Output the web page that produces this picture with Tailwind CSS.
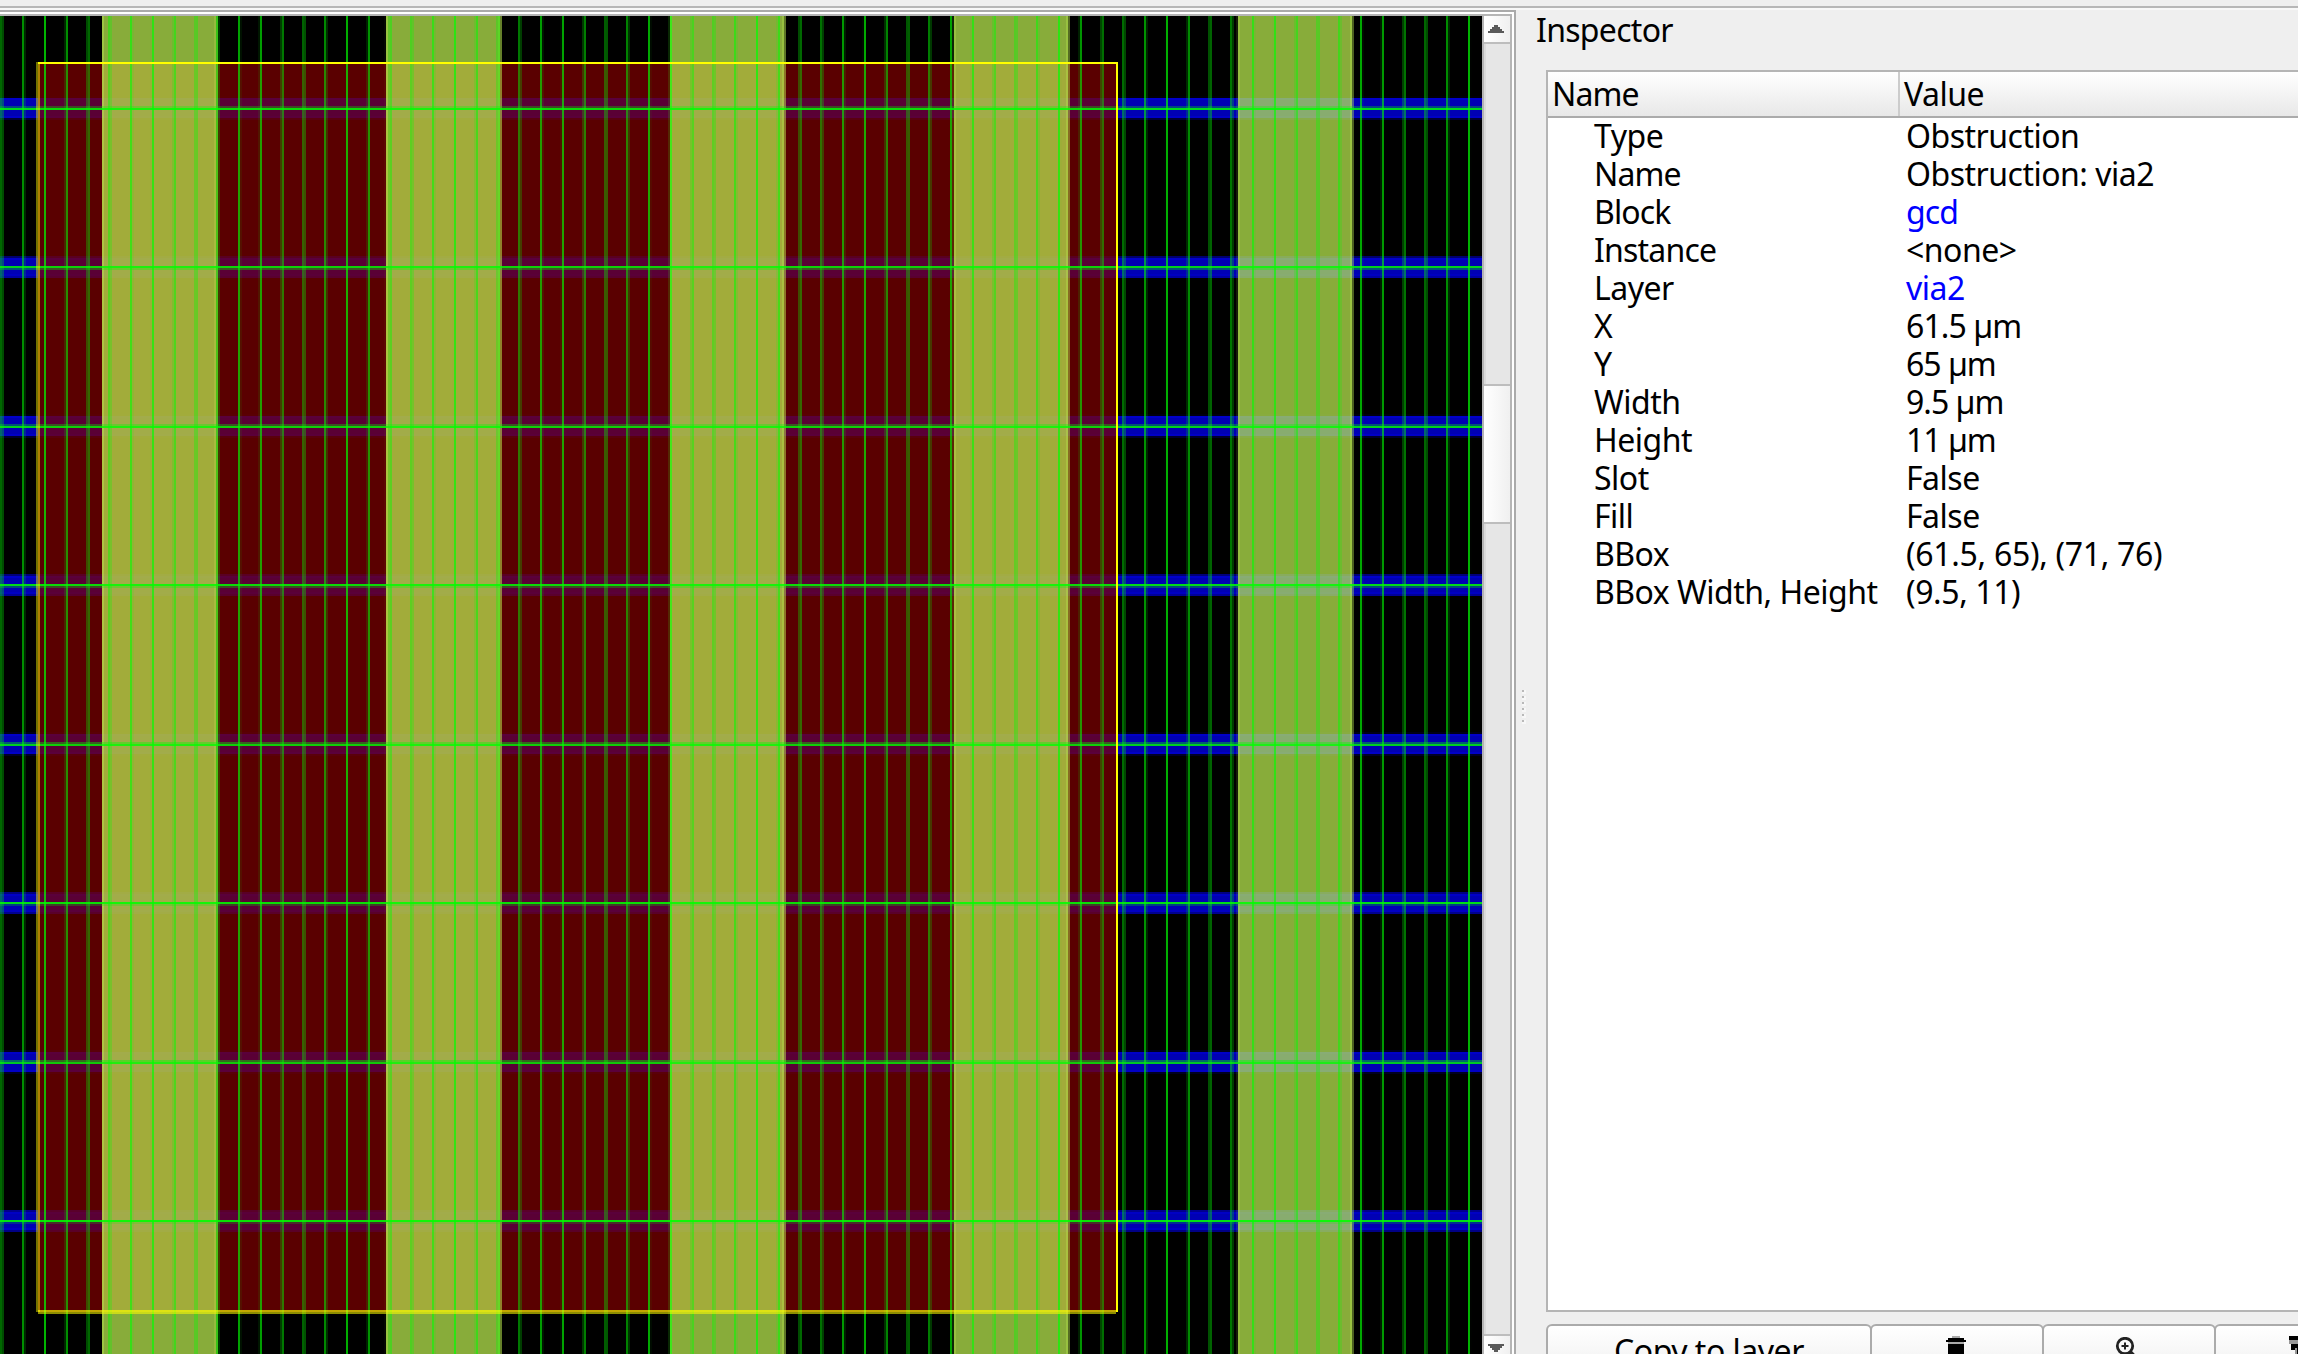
<!DOCTYPE html>
<html lang="en">
<head>
<meta charset="utf-8">
<title>Inspector</title>
<script src="https://cdn.jsdelivr.net/npm/@tailwindcss/browser@4"></script>
</head>
<body class="flex h-[1354px] w-[2298px] flex-col overflow-hidden bg-[#efefef] font-['Noto_Sans',sans-serif] text-[32px] tracking-[-0.5px] text-black">
  <div class="h-2 shrink-0 border-b-2 border-[#b7b7b7]"></div>
  <div class="h-0.5 shrink-0 bg-[#f8f8f8]"></div>

  <div class="flex min-h-0 flex-1">
    <!-- Layout viewer -->
    <main class="flex w-[1516px] shrink-0 flex-col border-t-2 border-r-2 border-[#aaaaaa] bg-white pt-0.5 pr-0.5">
      <div class="flex min-h-0 flex-1 border-t-2 border-r-2 border-[#b5b5b5]">
        <canvas id="layout" width="741" height="669" class="h-[1338px] w-[1482px] shrink-0 bg-black [image-rendering:pixelated]"></canvas>
        <div class="flex w-7 shrink-0 flex-col border-l-2 border-[#b5b5b5]">
          <div class="flex h-7 shrink-0 items-center border-b-2 border-[#bdbdbd] bg-linear-to-r from-white to-[#f0f0f0] pl-1">
            <svg class="h-2 w-4" viewBox="0 0 16 8" fill="#5a5a5a"><path d="M6 0h4v2h2v2h2v2h2v2H0V6h2V4h2V2h2z"/></svg>
          </div>
          <div class="h-[340px] shrink-0 border-l-2 border-[#dadada] bg-[#e6e6e6]"></div>
          <div class="h-[140px] shrink-0 border-y-2 border-[#bdbdbd] bg-linear-to-r from-white to-[#f0f0f0]"></div>
          <div class="flex-1 border-l-2 border-[#dadada] bg-[#e6e6e6]"></div>
          <div class="flex h-5 shrink-0 border-t-2 border-[#bdbdbd] bg-linear-to-r from-white to-[#f0f0f0] pt-2 pl-1">
            <svg class="h-2 w-4" viewBox="0 0 16 8" fill="#5a5a5a"><path d="M6 8h4V6h2V4h2V2h2V0H0v2h2v2h2v2h2z"/></svg>
          </div>
        </div>
      </div>
    </main>

    <!-- Splitter handle -->
    <div class="flex w-[19px] shrink-0 flex-col pt-[680px] pl-1.5">
      <svg class="h-9 w-1 shrink-0" viewBox="0 0 4 36">
        <path d="M2 0h2v4H0V2h2zM2 6h2v4H0V8h2zM2 12h2v4H0v-2h2zM2 18h2v4H0v-2h2zM2 24h2v4H0v-2h2zM2 30h2v4H0v-2h2z" fill="#f7f7f7"/>
        <path d="M0 0h2v2H0zM0 6h2v2H0zM0 12h2v2H0zM0 18h2v2H0zM0 24h2v2H0zM0 30h2v2H0z" fill="#b9b9b9"/>
      </svg>
    </div>

    <aside class="flex min-w-0 flex-1 flex-col">
      <h1 class="h-[60px] shrink-0 pl-px leading-[40px] tracking-[-0.7px]">Inspector</h1>
      <div class="ml-[11px] flex h-[1242px] shrink-0 flex-col border-y-2 border-l-2 border-[#b5b5b5] bg-white">
        <div class="flex h-[46px] shrink-0 border-b-2 border-[#ababab] bg-linear-to-b from-white to-[#e8e8e8] leading-[44px]">
          <div class="w-[352px] shrink-0 border-r-2 border-[#cccccc] pl-1 tracking-[-0.9px]">Name</div>
          <div class="pl-1">Value</div>
        </div>
        <dl class="grid auto-rows-[38px] grid-cols-[312px_1fr] pl-[46px] leading-[35px] whitespace-nowrap">
          <dt>Type</dt><dd>Obstruction</dd>
          <dt class="tracking-[-0.9px]">Name</dt><dd>Obstruction: via2</dd>
          <dt class="tracking-[-0.9px]">Block</dt><dd class="tracking-[-0.9px] text-[#0000ff]">gcd</dd>
          <dt class="tracking-[-0.8px]">Instance</dt><dd>&lt;none&gt;</dd>
          <dt>Layer</dt><dd class="text-[#0000ff]">via2</dd>
          <dt>X</dt><dd class="tracking-[-0.9px]">61.5 µm</dd>
          <dt>Y</dt><dd class="tracking-[-1px]">65 µm</dd>
          <dt>Width</dt><dd class="tracking-[-1px]">9.5 µm</dd>
          <dt>Height</dt><dd class="tracking-[-1px]">11 µm</dd>
          <dt>Slot</dt><dd>False</dd>
          <dt>Fill</dt><dd>False</dd>
          <dt>BBox</dt><dd class="tracking-[-0.3px]">(61.5, 65), (71, 76)</dd>
          <dt>BBox Width, Height</dt><dd class="tracking-[-0.4px]">(9.5, 11)</dd>
        </dl>
      </div>
      <div class="mt-3 ml-[11px] flex h-[30px] shrink-0 overflow-hidden">
        <button class="h-[52px] w-[326px] shrink-0 rounded-t-md border-2 border-[#ababab] bg-linear-to-b from-white to-[#f0f0f0] text-center leading-[43px]">Copy to layer</button>
        <button class="-ml-0.5 flex h-[52px] w-[174px] shrink-0 rounded-t-md border-2 border-[#ababab] bg-linear-to-b from-white to-[#f0f0f0] pt-2.5 pl-[74px]">
          <svg class="h-7 w-5" viewBox="0 0 20 28"><path d="M6 0h8v2H6z" fill="#aaa"/><path d="M2 2h16v2h2v2H0V4h2zM2 8h16v18H2z" fill="#000"/><path d="M2 6h16v2H2z" fill="#aaa"/></svg>
        </button>
        <button class="-ml-0.5 flex h-[52px] w-[174px] shrink-0 rounded-t-md border-2 border-[#ababab] bg-linear-to-b from-white to-[#f0f0f0] pt-[11px] pl-[71px]">
          <svg class="h-7 w-6" viewBox="0 0 24 28" fill="none" stroke="#222"><circle cx="10" cy="9" r="7.7" stroke-width="2.8"/><path d="M10 5.500v7M6.500 9h7" stroke-width="2"/><path d="M15 15l8 8" stroke-width="4"/></svg>
        </button>
        <button class="-ml-0.5 flex h-[52px] w-[174px] shrink-0 rounded-t-md border-2 border-[#ababab] bg-linear-to-b from-white to-[#f0f0f0] pt-2.5 pl-[73px]">
          <svg class="h-7 w-6 shrink-0" viewBox="0 0 24 28"><path d="M0 0h24v4H0zM2 8h22v20H6V14H2z" fill="#000"/><path d="M0 4h24v4H0zM6 12h2v16H6z" fill="#999"/></svg>
        </button>
      </div>
    </aside>
  </div>

  <script>
    // Layout drawn in logical pixels; the canvas is shown at twice its size.
    const g = document.getElementById('layout').getContext('2d');
    g.translate(0, -8);
    const box = (x, y, w, h, c) => { g.fillStyle = c; g.fillRect(x, y, w, h); };
    // A translucent fill with a one-pixel outline of the same colour.
    const shape = (x, y, w, h, c) => {
      box(x + .5, y, w - 1, h, c);
      box(x, y, 1, h, c);
      box(x + w - 1, y, 1, h, c);
    };
    const ROW = 79.48, A = .706;

    // metal1 rails
    const blue = `rgba(0,0,255,${A})`;
    for (let i = 0; i < 8; i++) {
      const y = 48.95 + i * ROW;
      box(0, y + .5, 741, 9.35, blue);
      box(0, y, 741, 1, blue);
      box(0, y + 9.35, 741, 1, blue);
    }
    // via2 obstruction
    box(19, 31.5, 539.5, 624.4, `rgba(128,0,0,${A})`);
    // power straps
    for (let i = 0; i < 5; i++) shape(51 + i * 141.96, 0, 57.7, 700, `rgba(193,244,82,${A})`);
    // routing tracks
    const green = `rgba(0,255,0,${A})`;
    for (let i = -2; i < 67; i++) box(22 + i * 10.788, 0, 1, 700, green);
    for (let i = 0; i < 8; i++) {
      const y = 53.78 + i * ROW;
      box(0, y, 741, 1, green);
      box(0, y, 741, 1, green);
      // strongest row of the track
      box(0, Math.round(y), 741, 1, 'rgba(0,255,0,.25)');
    }
    // selection outline
    box(18.55, 31, .95, 625, 'rgb(255,255,0)');
    box(558, 31, 1, 625, 'rgb(255,255,0)');
    box(19, 31, 539, 1, 'rgb(255,255,0)');
    box(19, 655.35, 539, 1.2, 'rgb(255,255,0)');
  </script>
</body>
</html>
